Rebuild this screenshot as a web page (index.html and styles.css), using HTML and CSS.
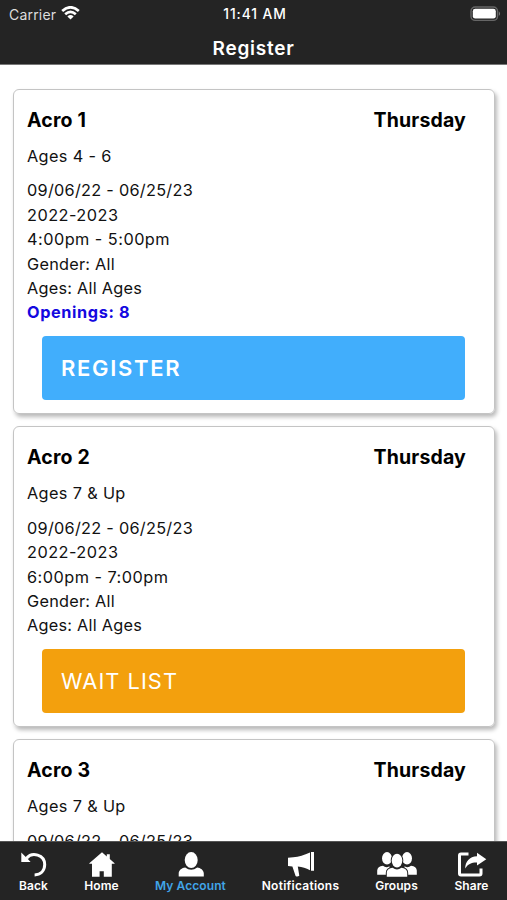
FILE: index.html
```html
<!DOCTYPE html>
<html lang="en">
<head>
<meta charset="utf-8">
<title>Register</title>
<link rel="stylesheet" href="styles.css">
</head>
<body>
<header class="top">
  <div class="status">
    <div class="carrier"><span>Carrier</span>
      <svg class="wifi" width="19" height="14" viewBox="0 0 19 14" fill="none" stroke="#fff" stroke-width="2.7"><path d="M1.2 5Q9.5-2.4 17.8 5M4.2 8.3Q9.5 3.6 14.8 8.3"/><path d="M6.4 10.4Q9.5 7.8 12.6 10.4L9.5 13.6Z" fill="#fff" stroke="none"/></svg>
    </div>
    <span class="clock">11:41 AM</span>
    <svg class="battery" width="31" height="16" viewBox="0 0 31 16"><rect x="1" y="1" width="26.5" height="13.4" rx="4.2" fill="none" stroke="#666" stroke-width="1.4"/><rect x="2.8" y="2.8" width="23" height="9.8" rx="2.4" fill="#fff"/><path d="M28.8 5.3Q31.4 7.7 28.8 10.1Z" fill="#777"/></svg>
  </div>
  <h1 class="page-title">Register</h1>
</header>
<main class="list">
  <article class="card">
    <div class="card-head"><h2>Acro 1</h2><h2 class="day">Thursday</h2></div>
    <p class="level">Ages 4 - 6</p>
    <ul class="details">
      <li class="dates">09/06/22 - 06/25/23</li><li class="season">2022-2023</li><li class="time">4:00pm - 5:00pm</li><li>Gender: All</li><li>Ages: All Ages</li><li class="openings">Openings: 8</li>
    </ul>
    <button class="action register">REGISTER</button>
  </article>
  <article class="card">
    <div class="card-head"><h2>Acro 2</h2><h2 class="day">Thursday</h2></div>
    <p class="level">Ages 7 &amp; Up</p>
    <ul class="details">
      <li class="dates">09/06/22 - 06/25/23</li><li class="season">2022-2023</li><li class="time">6:00pm - 7:00pm</li><li>Gender: All</li><li>Ages: All Ages</li>
    </ul>
    <button class="action wait">WAIT LIST</button>
  </article>
  <article class="card">
    <div class="card-head"><h2>Acro 3</h2><h2 class="day">Thursday</h2></div>
    <p class="level">Ages 7 &amp; Up</p>
    <ul class="details">
      <li class="dates">09/06/22 - 06/25/23</li>
    </ul>
  </article>
</main>
<nav class="tabs">
  <a class="tab w-back"><svg width="26" height="26" viewBox="0 0 26 26"><path d="M5.5 6.2C11-.5 23.7 2.5 23.7 12.6 23.7 19.3 19.2 22.8 13.6 22.9" fill="none" stroke="#fff" stroke-width="3"/><path d="M.3.5V10H9.6L7.3 7.5 3.5 3.7Z" fill="#fff"/></svg><span>Back</span></a>
  <a class="tab w-home"><svg width="26" height="26" viewBox="0 0 26 26" fill="#fff"><path d="M13 .3L.3 11.2V11.8H3V24.7H10.6V19.2H14.8V24.7H22.8V11.8H25.6V11.2L20.8 7V2.2H17.8V4.4Z"/></svg><span>Home</span></a>
  <a class="tab w-account active"><svg width="26" height="26" viewBox="0 0 26 26" fill="#fff"><ellipse cx="13.2" cy="8.1" rx="6.5" ry="8"/><path d="M.7 24.5V21.5C.7 17.8 4 15.8 7.2 15.4Q13.2 20.3 19.2 15.4C22.4 15.8 25.8 17.8 25.8 21.5V24.5Z"/></svg><span>My Account</span></a>
  <a class="tab w-notif"><svg width="28" height="26" viewBox="0 0 28 26" fill="#fff"><path d="M1 5.8L6.2 5.3C12 4.8 17 3 23 .5V18.2C18.8 16.2 15.6 15.2 10.8 14.6L12.3 23.7Q10.4 25.2 8.6 24L5.4 14.5 1 14ZM24 0H27V18.7H24Z"/></svg><span>Notifications</span></a>
  <a class="tab w-groups"><svg width="40" height="26" viewBox="0 0 40 26" fill="#fff"><ellipse cx="10" cy="6.3" rx="5" ry="6.2"/><ellipse cx="30" cy="6.3" rx="5" ry="6.2"/><path d="M.2 22.8V18.5Q.4 14.3 6 13.7 9 16.3 12.5 14.2V22.8ZM39.8 22.8V18.5Q39.6 14.3 34 13.7 31 16.3 27.5 14.2V22.8Z"/><g stroke="#242424" stroke-width="2" paint-order="stroke"><path d="M9.8 24.7V20.9C9.8 17.6 12.3 16.2 15.6 15.8Q20 19.4 24.4 15.8C27.7 16.2 30.2 17.6 30.2 20.9V24.7Z"/><ellipse cx="20" cy="8.6" rx="5.3" ry="6.8"/></g></svg><span>Groups</span></a>
  <a class="tab w-share"><svg width="30" height="26" viewBox="0 0 30 26"><path d="M11.5 2H4Q2.5 2 2.5 3.5V21.6Q2.5 23.1 4 23.1H22.5Q24 23.1 24 21.6V16.5" fill="none" stroke="#fff" stroke-width="3"/><path d="M20 .8L29.3 7.2 20 13.5V10.4C14.6 10.3 10.6 12 8.2 16.6 8.2 9.5 12.5 4.6 20 4.2Z" fill="#fff"/></svg><span>Share</span></a>
</nav>
</body>
</html>
```
FILE: styles.css
```css
* { box-sizing: border-box; margin: 0; padding: 0; }
body { display: flex; flex-direction: column; height: 900px; overflow: hidden; background: #fff; color: #111; font-family: Inter, "Liberation Sans", sans-serif; }
.top { flex: none; height: 65px; background: #242424; color: #fff; border-bottom: 1px solid #777; }
.status { display: grid; grid-template-columns: 1fr auto 1fr; align-items: center; height: 28px; padding: 0 6px 0 9px; font-size: 14px; }
.carrier { display: flex; align-items: center; gap: 5px; color: #ddd; letter-spacing: 0.2px; }
.wifi { margin-top: -2px; }
.clock { font-weight: 500; font-size: 13.8px; letter-spacing: 0.9px; }
.battery { justify-self: end; margin-top: -1px; }
.page-title { margin-top: 8px; font-size: 19px; line-height: 25px; font-weight: 600; text-align: center; letter-spacing: 0.75px; }
.list { flex: 1; min-height: 0; overflow: hidden; padding: 24px 12px 0 13px; }
.card { margin-bottom: 12.5px; padding: 17px 28px 12.5px 13px; border: 1px solid #c4c4c4; border-radius: 6px; box-shadow: 2px 3px 4px rgba(0,0,0,.28); }
.card-head { display: flex; justify-content: space-between; }
h2 { font-size: 19.5px; line-height: 26px; font-weight: 700; color: #000; letter-spacing: 0.15px; }
.level { margin-top: 11px; font-size: 16.3px; line-height: 24.4px; letter-spacing: 0.35px; }
.details { list-style: none; margin-top: 10px; font-size: 16.3px; line-height: 24.4px; letter-spacing: 0.25px; }
.dates { letter-spacing: 0.27px; }
.season, .time { letter-spacing: 0.47px; }
.openings { color: #1408e0; font-weight: 700; letter-spacing: 0.6px; }
.action { display: block; width: 423px; height: 64.5px; margin: 11px 0 0 15px; padding: 0 19px; border: 0; border-radius: 4px; color: #fff; font: 400 22px/64px Inter, sans-serif; letter-spacing: 1.7px; text-align: left; }
.register { background: #41aefc; font-weight: 600; }
.wait { background: #f3a00d; font-size: 21.8px; letter-spacing: 1.05px; }
.tabs { flex: none; display: flex; gap: 36px; height: 59px; padding: 10px 0 0 19px; background: #242424; border-top: 1px solid #555; color: #fff; }
.tab { display: flex; flex-direction: column; align-items: center; font-size: 12px; line-height: 16px; font-weight: 600; white-space: nowrap; letter-spacing: 0.08px; }
.w-back { width: 29px; }
.w-home { width: 35px; }
.w-account { width: 71px; }
.w-notif { width: 77px; letter-spacing: 0.25px; }
.w-groups { width: 43px; }
.w-share { width: 35px; }
.active { color: #41a5e8; }
```
